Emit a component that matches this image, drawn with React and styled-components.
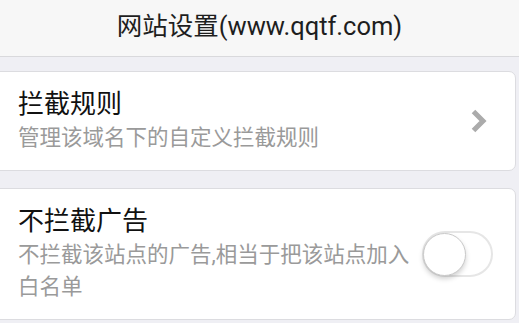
import React from "react";
import styled, { createGlobalStyle } from "styled-components";

const GlobalStyle = createGlobalStyle`
    html, body {
        margin: 0;
        padding: 0;
        background: #efeff4;
        overflow: hidden;
    }
    body {
        font-family: Roboto, "Noto Sans CJK SC", "Noto Sans", sans-serif;
    }
`;

const Page = styled.div`
    width: 519px;
    height: 323px;
    background: #efeff4;
    overflow: hidden;
`;

const Header = styled.header`
    box-sizing: border-box;
    height: 57px;
    padding-bottom: 9px;
    display: flex;
    align-items: center;
    justify-content: center;
    background: #f7f7f7;
    border-bottom: 1px solid #d9d9dc;
    color: #1e1e1e;
    font-size: 25.5px;
`;

const List = styled.div`
    display: flex;
    flex-direction: column;
    gap: 17px;
    padding-top: 14px;
`;

const Card = styled.div`
    display: flex;
    align-items: center;
    gap: 8px;
    margin: 0 3px 0 -10px;
    padding: 16px ${(props) => props.$padRight}px 16px 27px;
    background: #fff;
    border: 1px solid #dcdce0;
    border-radius: 7px;
`;

const TextBlock = styled.div`
    flex: 1;
    min-width: 0;
`;

const Title = styled.div`
    font-size: 26px;
    line-height: 32px;
    color: #111;
`;

const Desc = styled.div`
    margin-top: 2px;
    font-size: 21.5px;
    line-height: 32px;
    color: #9a9a9a;
`;

const Chevron = styled.svg`
    flex: none;
    width: 16px;
    height: 24px;
`;

const Switch = styled.div`
    position: relative;
    flex: none;
    box-sizing: border-box;
    width: 71px;
    height: 46px;
    border: 2px solid #e6e6e6;
    border-radius: 23px;
    background: #fff;
`;

const Knob = styled.span`
    position: absolute;
    left: -1px;
    top: 0px;
    box-sizing: border-box;
    width: 43px;
    height: 43px;
    border-radius: 50%;
    background: #fff;
    border: 1px solid #c9c9c9;
    box-shadow: 0 3px 5px rgba(0, 0, 0, 0.18);
`;

export default function App() {
    return (
        <Page>
            <GlobalStyle />
            <Header>网站设置(www.qqtf.com)</Header>
            <List>
                <Card $padRight={28}>
                    <TextBlock>
                        <Title>拦截规则</Title>
                        <Desc>管理该域名下的自定义拦截规则</Desc>
                    </TextBlock>
                    <Chevron viewBox="0 0 16 24">
                        <polyline
                            points="2.5,2.5 12,12 2.5,21.5"
                            fill="none"
                            stroke="#ababab"
                            strokeWidth="5"
                            strokeLinejoin="miter"
                        />
                    </Chevron>
                </Card>
                <Card $padRight={22}>
                    <TextBlock>
                        <Title>不拦截广告</Title>
                        <Desc>不拦截该站点的广告,相当于把该站点加入白名单</Desc>
                    </TextBlock>
                    <Switch>
                        <Knob />
                    </Switch>
                </Card>
            </List>
        </Page>
    );
}
